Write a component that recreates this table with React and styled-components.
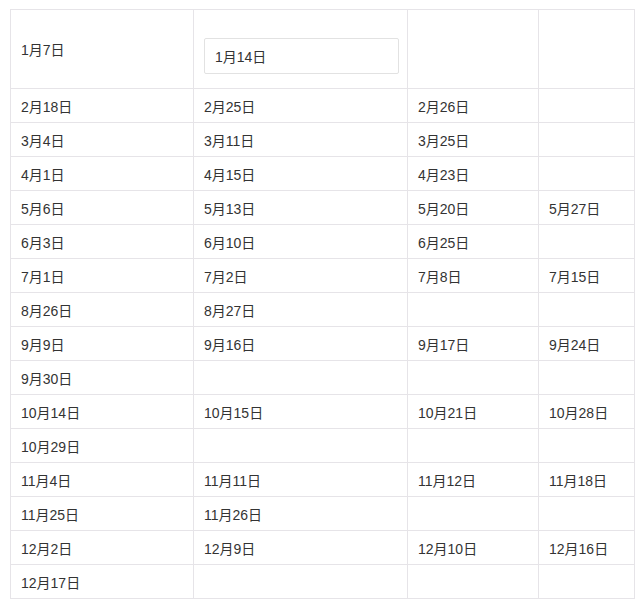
import React from 'react'
import styled, { createGlobalStyle } from 'styled-components'

const GlobalStyle = createGlobalStyle`
  body {
    margin: 0;
    background: #fff;
    font-family: "Liberation Sans", "Noto Sans CJK SC", sans-serif;
  }
`

const Page = styled.div`
  padding: 9px 0 0 10px;
`

const Table = styled.table`
  border-collapse: collapse;
  table-layout: fixed;
  width: 624px;
  font-size: 14px;
  color: #333;
`

const Col = styled.col`
  width: ${props => props.w}px;
`

const Row = styled.tr`
  height: ${props => (props.tall ? 79 : 34)}px;
`

const Cell = styled.td`
  border: 1px solid #e6e4e8;
  padding: 0 10px;
  vertical-align: middle;
  white-space: nowrap;
`

const InputCell = styled(Cell)`
  vertical-align: top;
  padding-top: 28px;
`

const DateInput = styled.input`
  display: block;
  box-sizing: border-box;
  width: 195px;
  height: 36px;
  margin: 0;
  padding: 0 10px;
  border: 1px solid #e2e2e2;
  border-radius: 2px;
  font: inherit;
  color: #333;
  background: #fff;
  outline: none;
`

const rows = [
  ['2月18日', '2月25日', '2月26日', ''],
  ['3月4日', '3月11日', '3月25日', ''],
  ['4月1日', '4月15日', '4月23日', ''],
  ['5月6日', '5月13日', '5月20日', '5月27日'],
  ['6月3日', '6月10日', '6月25日', ''],
  ['7月1日', '7月2日', '7月8日', '7月15日'],
  ['8月26日', '8月27日', '', ''],
  ['9月9日', '9月16日', '9月17日', '9月24日'],
  ['9月30日', '', '', ''],
  ['10月14日', '10月15日', '10月21日', '10月28日'],
  ['10月29日', '', '', ''],
  ['11月4日', '11月11日', '11月12日', '11月18日'],
  ['11月25日', '11月26日', '', ''],
  ['12月2日', '12月9日', '12月10日', '12月16日'],
  ['12月17日', '', '', '']
]

const App = () => {
  return (
    <Page>
      <GlobalStyle />
      <Table>
        <colgroup>
          <Col w={183} />
          <Col w={214} />
          <Col w={131} />
          <Col w={96} />
        </colgroup>
        <tbody>
          <Row tall>
            <Cell>1月7日</Cell>
            <InputCell>
              <DateInput defaultValue="1月14日" readOnly />
            </InputCell>
            <Cell />
            <Cell />
          </Row>
          {rows.map((row, i) => (
            <Row key={i}>
              {row.map((text, j) => (
                <Cell key={j}>{text}</Cell>
              ))}
            </Row>
          ))}
        </tbody>
      </Table>
    </Page>
  )
}

export default App
